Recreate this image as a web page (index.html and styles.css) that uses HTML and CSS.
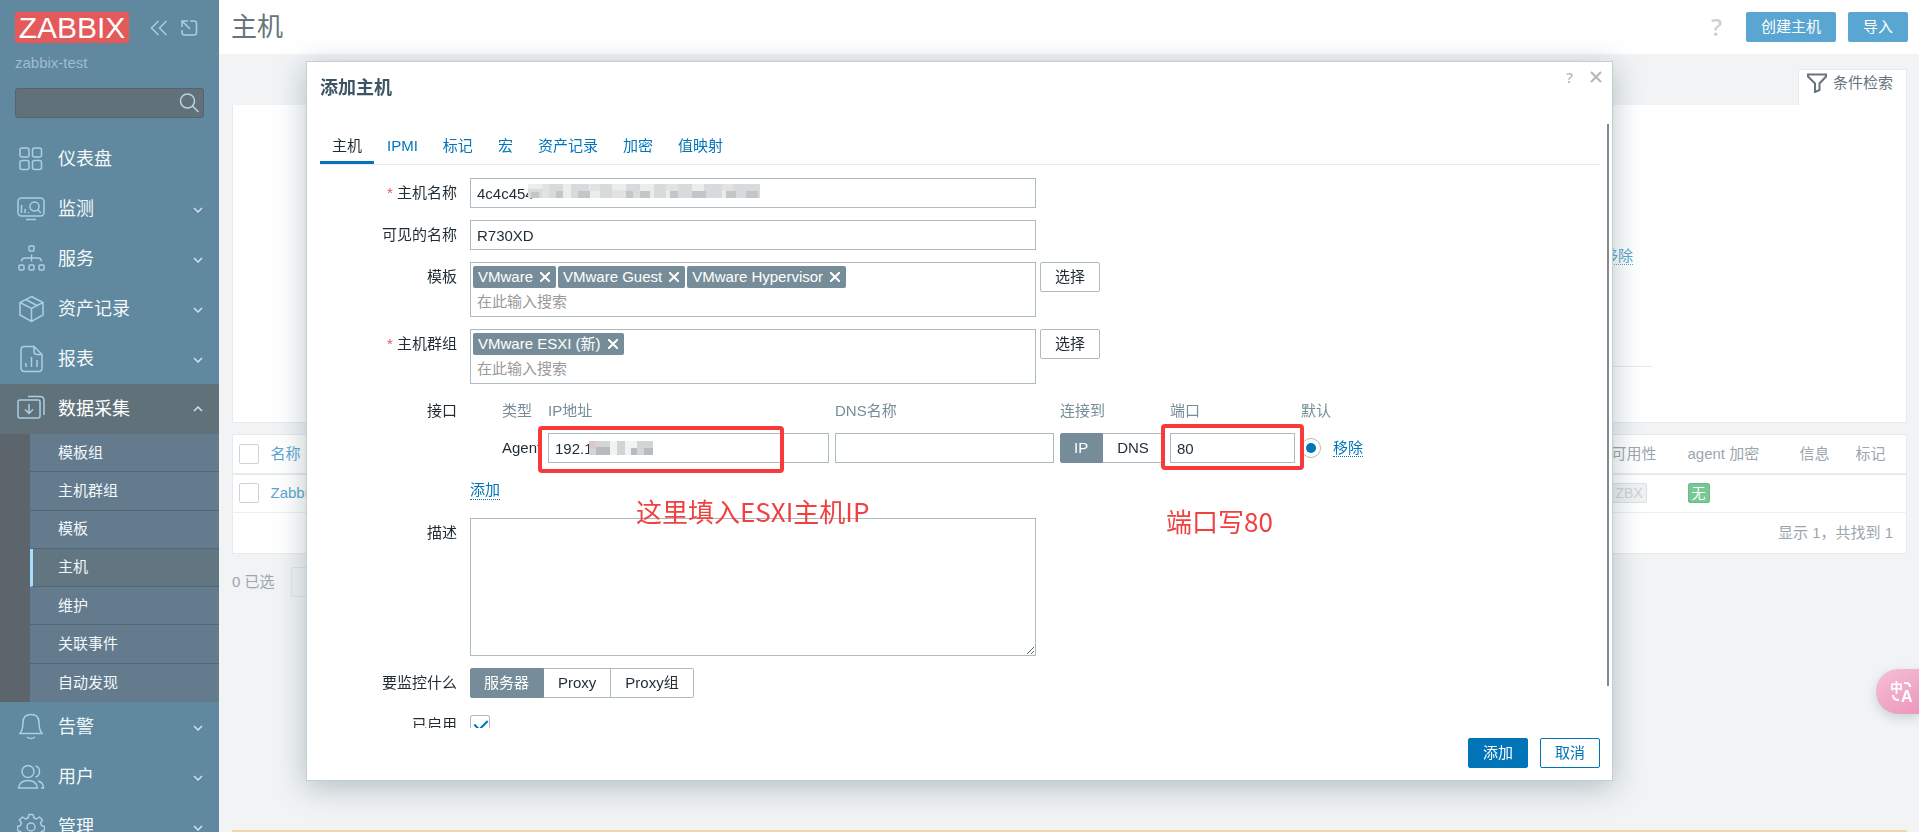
FILE: index.html
```html
<!DOCTYPE html>
<html lang="zh-CN">

<head>
  <meta charset="utf-8">
  <title>主机</title>
  <link rel="icon" href="data:,">
  <link rel="stylesheet" href="styles.css">
</head>

<body>
  <aside class="sidebar">
    <div class="sidebar-header">
      <a class="logo" href="#">ZABBIX</a>
      <button class="icon-button" type="button" aria-label="收起">
        <svg width="18" height="18" viewBox="0 0 18 18"><path d="M8.500 2 1.500 9l7 7M16.500 2l-7 7 7 7"/></svg>
      </button>
      <button class="icon-button" type="button" aria-label="隐藏">
        <svg width="18" height="18" viewBox="0 0 18 18"><path d="M10 2h4q2.500 0 2.500 2.500v9q0 2.500-2.500 2.500H4.500Q2 16 2 13.500V11M2 8V2h6M2.500 2.500l7.500 7.500"/></svg>
      </button>
    </div>
    <div class="server-name">zabbix-test</div>
    <form class="search">
      <input type="text" aria-label="搜索">
      <button type="button" aria-label="搜索">
        <svg width="20" height="20" viewBox="0 0 20 20"><circle cx="8.500" cy="8" r="7"/><path d="M13.500 13l6 6"/></svg>
      </button>
    </form>

    <nav>
      <ul class="menu">
        <li>
          <a href="#">
            <svg class="menu-icon" viewBox="0 0 28 28"><rect x="3" y="3" width="9" height="9" rx="2"/><rect x="15.500" y="3" width="9" height="9" rx="2"/><rect x="3" y="15.500" width="9" height="9" rx="2"/><rect x="15.500" y="15.500" width="9" height="9" rx="2"/></svg>
            <span>仪表盘</span>
          </a>
        </li>
        <li>
          <a href="#">
            <svg class="menu-icon" viewBox="0 0 28 28"><rect x="1" y="3" width="26" height="18" rx="3.500"/><path d="M9 24.500h10M4.500 10v8M8 14v4M11.500 17v1"/><circle cx="17.500" cy="11.500" r="4.500"/><path d="M21 15l3 3"/></svg>
            <span>监测</span>
            <svg class="chevron" viewBox="0 0 8 8"><path d="M0 3l4 4 4-4"/></svg>
          </a>
        </li>
        <li>
          <a href="#">
            <svg class="menu-icon" viewBox="0 0 28 28"><rect x="12" y="1" width="5" height="5" rx="1"/><rect x="2" y="20" width="5" height="5" rx="1"/><rect x="12" y="20" width="5" height="5" rx="1"/><rect x="22" y="20" width="5" height="5" rx="1"/><path d="M14.500 9.500v7M4.500 16.500q0-3.500 4-3.500h12q4 0 4 3.500"/></svg>
            <span>服务</span>
            <svg class="chevron" viewBox="0 0 8 8"><path d="M0 3l4 4 4-4"/></svg>
          </a>
        </li>
        <li>
          <a href="#">
            <svg class="menu-icon" viewBox="0 0 28 28"><path d="M14.500 1.500l11.500 6v12.500l-11.500 6.500-11.500-6.500v-12.500zM3 7.500l11.500 6 11.500-6M14.500 13.500v13M8.500 4.500l11.500 6"/></svg>
            <span>资产记录</span>
            <svg class="chevron" viewBox="0 0 8 8"><path d="M0 3l4 4 4-4"/></svg>
          </a>
        </li>
        <li>
          <a href="#">
            <svg class="menu-icon" viewBox="0 0 28 28"><path d="M17 1.500H7.500q-3.500 0-3.500 3.500v18q0 3.500 3.500 3.500h14q3.500 0 3.500-3.500V9.500zM17 1.500v5q0 3 3 3h5M9 18v4M14.500 12v10M20 15v7"/></svg>
            <span>报表</span>
            <svg class="chevron" viewBox="0 0 8 8"><path d="M0 3l4 4 4-4"/></svg>
          </a>
        </li>
        <li class="open">
          <a href="#">
            <svg class="menu-icon" viewBox="0 0 28 28"><rect x="1" y="5" width="22" height="18" rx="2"/><path d="M11 1.500h12q4 0 4 4V20M12 9v9M8 14.500l4 4 4-4"/></svg>
            <span>数据采集</span>
            <svg class="chevron" viewBox="0 0 8 8"><path d="M0 6l4-4 4 4"/></svg>
          </a>
          <ul class="submenu">
            <li><a href="#">模板组</a></li>
            <li><a href="#">主机群组</a></li>
            <li><a href="#">模板</a></li>
            <li><a class="selected" href="#">主机</a></li>
            <li><a href="#">维护</a></li>
            <li><a href="#">关联事件</a></li>
            <li><a href="#">自动发现</a></li>
          </ul>
        </li>
        <li>
          <a href="#">
            <svg class="menu-icon" viewBox="0 0 28 28"><path d="M3 20.500q3-4 3-11 0-8 8-8t8 8q0 7 3 11zM10 24q4 3 8 0"/></svg>
            <span>告警</span>
            <svg class="chevron" viewBox="0 0 8 8"><path d="M0 3l4 4 4-4"/></svg>
          </a>
        </li>
        <li>
          <a href="#">
            <svg class="menu-icon" viewBox="0 0 28 28"><circle cx="11" cy="8.500" r="6"/><path d="M1.500 25q1-7.500 9.500-7.500t9.500 7.500zM18.500 3q4 1 4 5.500t-4 5.500M21 18q5.500 1.500 5.500 7H24"/></svg>
            <span>用户</span>
            <svg class="chevron" viewBox="0 0 8 8"><path d="M0 3l4 4 4-4"/></svg>
          </a>
        </li>
        <li>
          <a href="#">
            <svg class="menu-icon" viewBox="0 0 28 28"><circle cx="14" cy="14" r="4"/><path stroke-linejoin="round" d="M12 1.500h4l1 3.500 2.500 1 3-2 3 3-2 3 1 2.500 3 1v4l-3 1-1 2.500 2 3-3 3-3-2-2.500 1-1 2.500h-4l-1-2.500-2.500-1-3 2-3-3 2-3-1-2.500-3-1v-4l3-1 1-2.500-2-3 3-3 3 2L11 5z"/></svg>
            <span>管理</span>
            <svg class="chevron" viewBox="0 0 8 8"><path d="M0 3l4 4 4-4"/></svg>
          </a>
        </li>
      </ul>
    </nav>
  </aside>

  <div class="wrapper">
    <header class="page-header">
      <h1>主机</h1>
      <a class="help" href="#">?</a>
      <button class="btn" type="button">创建主机</button>
      <button class="btn" type="button">导入</button>
    </header>

    <main>
      <div class="filter-tab">
        <a href="#">
          <svg width="22" height="20" viewBox="0 0 22 20"><path d="M2 1.500h18v2l-6.500 7v6.500l-4.500 2v-8.500L2 3.500z"/></svg>
          条件检索
        </a>
      </div>
      <section class="filter">
        <div class="filter-tags"><a class="dotted" href="#">移除</a></div>
      </section>

      <table class="list">
        <thead>
          <tr>
            <th class="col-check"><input type="checkbox" aria-label="全选"></th>
            <th><a href="#">名称</a></th>
            <th class="col-available">可用性</th>
            <th class="col-agent">agent 加密</th>
            <th class="col-info">信息</th>
            <th class="col-tags">标记</th>
          </tr>
        </thead>
        <tbody>
          <tr>
            <td><input type="checkbox" aria-label="Zabbix server"></td>
            <td><a href="#">Zabbix server</a></td>
            <td><span class="badge badge-grey">ZBX</span></td>
            <td><span class="badge badge-green">无</span></td>
            <td></td>
            <td></td>
          </tr>
        </tbody>
        <tfoot>
          <tr><td colspan="6">显示 1，共找到 1</td></tr>
        </tfoot>
      </table>

      <div class="actions">
        <span>0 已选</span>
        <button type="button" disabled>启用</button>
      </div>
    </main>
    <div class="warning-line"></div>
  </div>

  <div class="overlay">
    <div class="modal" role="dialog" aria-labelledby="modal-title">
      <div class="modal-header">
        <h2 id="modal-title">添加主机</h2>
        <a class="modal-help" href="#">?</a>
        <button class="modal-close" type="button" aria-label="关闭">
          <svg width="12" height="12" viewBox="0 0 12 12"><path d="M1 1l10 10M11 1L1 11"/></svg>
        </button>
      </div>

      <div class="modal-body">
        <ul class="tabs">
          <li class="active"><a href="#">主机</a></li>
          <li><a href="#">IPMI</a></li>
          <li><a href="#">标记</a></li>
          <li><a href="#">宏</a></li>
          <li><a href="#">资产记录</a></li>
          <li><a href="#">加密</a></li>
          <li><a href="#">值映射</a></li>
        </ul>

        <form class="form-grid">
          <label class="required" for="host">主机名称</label>
          <div class="field">
            <input id="host" class="wide" type="text" value="4c4c454">
            <svg class="mosaic mosaic-host" width="232" height="14" viewBox="0 0 232 14">
              <rect width="232" height="14" fill="#ebecec"/>
              <path fill="#d9dadb" d="M0 5h14v9H0zM21 0h14v14H21zM43 0h18v14H43zM72 0h12v14H72zM98 0h14v14H98zM126 0h12v14h-12zM150 0h14v14h-14zM176 0h18v14h-18zM205 0h27v14h-27z"/>
              <path fill="#c3c5c7" d="M3 8h8v6H3zM28 7h7v7h-7zM50 7h12v7H50zM98 7h7v7h-7zM112 7h10v7h-10zM142 7h8v7h-8zM164 7h14v7h-14zM198 7h10v7h-10zM218 7h12v7h-12z"/>
              <path fill="#e2e2e3" d="M14 0h7v14h-7zM62 0h10v7H62zM84 6h14v8H84zM138 0h12v7h-12zM194 0h11v7h-11z"/>
            </svg>
          </div>

          <label for="visible-name">可见的名称</label>
          <div class="field"><input id="visible-name" class="wide" type="text" value="R730XD"></div>

          <label for="templates">模板</label>
          <div class="field">
            <div class="multiselect wide">
              <ul>
                <li>VMware <button type="button" aria-label="移除"><svg width="10" height="10" viewBox="0 0 10 10"><path d="M0 0l10 10M10 0L0 10"/></svg></button></li>
                <li>VMware Guest <button type="button" aria-label="移除"><svg width="10" height="10" viewBox="0 0 10 10"><path d="M0 0l10 10M10 0L0 10"/></svg></button></li>
                <li>VMware Hypervisor <button type="button" aria-label="移除"><svg width="10" height="10" viewBox="0 0 10 10"><path d="M0 0l10 10M10 0L0 10"/></svg></button></li>
              </ul>
              <input id="templates" type="text" placeholder="在此输入搜索">
            </div>
            <button class="btn-grey" type="button">选择</button>
          </div>

          <label class="required" for="groups">主机群组</label>
          <div class="field">
            <div class="multiselect wide">
              <ul>
                <li>VMware ESXI (新) <button type="button" aria-label="移除"><svg width="10" height="10" viewBox="0 0 10 10"><path d="M0 0l10 10M10 0L0 10"/></svg></button></li>
              </ul>
              <input id="groups" type="text" placeholder="在此输入搜索">
            </div>
            <button class="btn-grey" type="button">选择</button>
          </div>

          <div class="form-label">接口</div>
          <div class="interfaces">
            <table>
              <thead>
                <tr>
                  <th class="col-toggle"></th>
                  <th class="col-type">类型</th>
                  <th class="col-ip">IP地址</th>
                  <th class="col-dns">DNS名称</th>
                  <th class="col-connect">连接到</th>
                  <th class="col-port">端口</th>
                  <th class="col-default">默认</th>
                  <th></th>
                </tr>
              </thead>
              <tbody>
                <tr>
                  <td></td>
                  <td>Agent</td>
                  <td>
                    <div class="field">
                      <input type="text" aria-label="IP地址" value="192.1">
                      <svg class="mosaic mosaic-ip" width="64" height="14" viewBox="0 0 64 14">
                        <rect width="64" height="14" fill="#f1f2f2"/>
                        <path fill="#d3d4d6" d="M0 0h21v14H0zM28 0h8v14h-8zM48 0h16v14H48z"/>
                        <path fill="#b8babd" d="M7 6h14v8H7zM42 7h6v7h-6zM55 7h9v7h-9z"/>
                        <path fill="#d9c9c4" d="M0 0h6v7H0z"/>
                      </svg>
                      <div class="mark mark-ip"></div>
                      <div class="note note-ip">这里填入ESXI主机IP</div>
                    </div>
                  </td>
                  <td><input type="text" aria-label="DNS名称"></td>
                  <td>
                    <div class="segmented">
                      <input id="connect-ip" type="radio" name="connect" checked><label for="connect-ip">IP</label>
                      <input id="connect-dns" type="radio" name="connect"><label for="connect-dns">DNS</label>
                    </div>
                  </td>
                  <td>
                    <div class="field">
                      <input type="text" aria-label="端口" value="80">
                      <div class="mark mark-port"></div>
                      <div class="note note-port">端口写80</div>
                    </div>
                  </td>
                  <td><input type="radio" name="main-interface" aria-label="默认" checked></td>
                  <td><a class="dotted" href="#">移除</a></td>
                </tr>
              </tbody>
            </table>
            <a class="dotted add-interface" href="#">添加</a>
          </div>

          <label for="description">描述</label>
          <div class="field"><textarea id="description" class="wide"></textarea></div>

          <div class="form-label">要监控什么</div>
          <div class="segmented">
            <input id="by-server" type="radio" name="monitored" checked><label for="by-server">服务器</label>
            <input id="by-proxy" type="radio" name="monitored"><label for="by-proxy">Proxy</label>
            <input id="by-group" type="radio" name="monitored"><label for="by-group">Proxy组</label>
          </div>

          <label for="enabled">已启用</label>
          <div class="field field-check"><input id="enabled" type="checkbox" checked></div>
        </form>
      </div>
      <div class="scroll-thumb"></div>

      <div class="modal-footer">
        <button class="btn-primary" type="button">添加</button>
        <button class="btn-alt" type="button">取消</button>
      </div>
    </div>
  </div>

  <button class="translate" type="button" aria-label="翻译">
    <svg width="24" height="24" viewBox="0 0 24 24">
      <text x="0" y="12" font-size="13">中</text>
      <text x="11" y="22" font-size="16">A</text>
      <path d="M14 3h2q4 0 4 4M3 15q0 5 6 5"/>
    </svg>
  </button>
</body>

</html>
```

FILE: styles.css
```css
* {
  box-sizing: border-box;
}

body {
  margin: 0;
  height: 100vh;
  display: flex;
  overflow: hidden;
  font-family: "Liberation Sans", "Noto Sans CJK SC", sans-serif;
  font-size: 15px;
  line-height: 18px;
  color: #1f2c33;
  background: #f1f3f5;
}

ul {
  list-style: none;
  margin: 0;
  padding: 0;
}

a {
  color: #0275b8;
  text-decoration: none;
}

button,
input,
textarea {
  font: inherit;
  color: inherit;
  margin: 0;
}

button {
  padding: 0;
  border: 0;
  background: none;
}

svg {
  display: block;
  fill: none;
}

/* sidebar */
.sidebar {
  width: 219px;
  flex-shrink: 0;
  overflow: hidden;
  background: #60889e;
}

.sidebar-header {
  display: flex;
  align-items: center;
  gap: 12px;
  padding: 12px 15px 0;
}

.logo {
  width: 114px;
  height: 31px;
  margin-right: 9px;
  line-height: 32px;
  font-size: 30px;
  text-align: center;
  color: #fff;
  background: #e45959;
}

.icon-button svg,
.search svg,
.menu svg {
  stroke: #a9cfe6;
  stroke-width: 1.5;
}

.server-name {
  padding: 11px 15px 0;
  color: #9dbdd0;
}

.search {
  display: flex;
  align-items: center;
  height: 30px;
  margin: 16px 15px;
  padding-right: 4px;
  border: 1px solid #55646c;
  border-radius: 3px;
  background: #60717a;
}

.search input {
  flex: 1;
  min-width: 0;
  border: 0;
  background: none;
}

.search svg {
  stroke: #b9d3e2;
}

.menu a {
  display: flex;
  align-items: center;
  height: 50px;
  padding: 0 17px;
  font-size: 18px;
  color: #f2f8fb;
}

.menu span {
  flex: 1;
}

.menu-icon {
  width: 28px;
  height: 28px;
  margin-right: 13px;
}

.menu .chevron {
  width: 8px;
  height: 8px;
  overflow: visible;
  stroke: #cfe5f2;
}

.menu .open {
  background: #5d656c;
}

.menu .open > a {
  background: #60717a;
  color: #fff;
}

.menu .submenu {
  display: grid;
  grid-auto-rows: 1fr;
  height: 268px;
  margin-left: 30px;
  background: #637b8d;
}

.menu .submenu a {
  height: 100%;
  padding: 0 0 0 28px;
  font-size: 15px;
  border-bottom: 1px solid #506872;
}

.menu .submenu li:last-child a {
  border-bottom: 0;
}

.menu .submenu .selected {
  padding-left: 25px;
  border-left: 3px solid #a6dcfb;
  background: #617680;
}

/* page */
.wrapper {
  flex: 1;
  min-width: 0;
  display: flex;
  flex-direction: column;
}

.page-header {
  display: flex;
  align-items: center;
  gap: 12px;
  height: 54px;
  padding: 0 11px 0 12px;
  background: #fff;
}

.page-header h1 {
  flex: 1;
  margin: 0;
  font-size: 26px;
  font-weight: normal;
  line-height: 30px;
  color: #66757c;
}

.help {
  margin-right: 12px;
  font-family: "Open Sans", sans-serif;
  font-size: 24px;
  font-weight: 600;
  color: #ccd1d3;
}

.btn {
  height: 30px;
  padding: 0 15px;
  border-radius: 2px;
  color: #fff;
  background: #58a6d1;
}

main {
  flex: 1;
  padding: 15px 12px 0 13px;
}

.filter-tab {
  display: flex;
  justify-content: flex-end;
}

.filter-tab a {
  display: flex;
  gap: 5px;
  height: 36px;
  padding: 3px 13px 0 7px;
  line-height: 20px;
  color: #66757c;
  background: #fff;
  border: 1px solid #e6eaec;
  border-bottom: 0;
}

.filter-tab svg {
  stroke: #66757c;
  stroke-width: 2;
}

.filter {
  display: flex;
  justify-content: flex-end;
  height: 318px;
  padding-right: 254px;
  background: #fff;
  border: 1px solid #e6eaec;
  border-top: 0;
}

.filter-tags {
  width: 500px;
  height: 262px;
  padding: 142px 19px 0 0;
  text-align: right;
  border-bottom: 1px solid #e6eaec;
}

.filter a,
.list a {
  color: #5aa5cf;
}

.dotted {
  border-bottom: 1px dotted currentColor;
}

.list {
  width: 100%;
  margin-top: 11px;
  border-collapse: collapse;
  table-layout: fixed;
  background: #fff;
  border: 1px solid #e6eaec;
  color: #9aa6ac;
}

.list th,
.list td {
  padding: 0;
  height: 39px;
  text-align: left;
  font-weight: normal;
}

.list thead th {
  border-bottom: 2px solid #e6eaec;
}

.list tfoot td {
  height: 41px;
  padding-right: 13px;
  text-align: right;
  border-top: 1px solid #edf0f1;
}

.list .col-check {
  width: 38px;
}

.list .col-available {
  width: 76px;
}

.list .col-agent {
  width: 112px;
}

.list .col-info {
  width: 56px;
}

.list .col-tags {
  width: 51px;
}

.list input {
  margin-left: 6px;
}

.badge {
  display: inline-block;
  height: 20px;
  padding: 0 3px;
  border: 1px solid #dde1e3;
  border-radius: 2px;
  font-size: 14px;
}

.badge-grey {
  color: #cdd3d6;
  background: #f0f2f2;
}

.badge-green {
  color: #fff;
  background: #77c893;
  border-color: #6abb87;
}

.actions {
  display: flex;
  align-items: center;
  gap: 16px;
  padding-top: 13px;
  color: #9aa6ac;
}

.actions button {
  height: 30px;
  padding: 0 18px;
  border: 1px solid #e0e4e6;
  border-radius: 2px;
}

.warning-line {
  height: 2px;
  margin: 0 12px 0 13px;
  background: #ecd9a4;
}

input[type="checkbox"],
input[type="radio"] {
  appearance: none;
  display: block;
  width: 20px;
  height: 20px;
  border: 1px solid #acbbc2;
  border-radius: 2px;
  background: #fff;
}

.list input[type="checkbox"] {
  border-color: #cdd3d6;
}

input[type="checkbox"]:checked::after {
  content: "";
  display: block;
  width: 6px;
  height: 11px;
  margin: 1px 0 0 6px;
  border: solid #0275b8;
  border-width: 0 2px 2px 0;
  transform: rotate(45deg);
}

input[type="radio"] {
  border-radius: 50%;
}

input[type="radio"]:checked::after {
  content: "";
  display: block;
  width: 10px;
  height: 10px;
  margin: 4px;
  border-radius: 50%;
  background: #0275b8;
}

/* dialog */
.overlay {
  position: fixed;
  inset: 0;
  display: flex;
  justify-content: center;
  padding: 61px 12px 51px;
}

.modal {
  position: relative;
  display: flex;
  flex-direction: column;
  width: 100%;
  max-width: 1307px;
  background: #fff;
  border: 1px solid #c5cfd1;
  box-shadow: 0 6px 28px rgba(80, 110, 115, 0.4);
}

.modal-header {
  display: flex;
  height: 62px;
  padding: 0 10px 0 13px;
  color: #b0b8bb;
}

.modal-header h2 {
  flex: 1;
  margin: 0;
  font-size: 18px;
  line-height: 52px;
  color: #3c5563;
}

.modal-help {
  margin-right: 17px;
  font-family: "Open Sans", sans-serif;
  line-height: 30px;
  font-weight: 600;
  color: inherit;
}

.modal-close {
  height: 30px;
}

.modal-close svg {
  stroke: currentColor;
  stroke-width: 2;
}

.modal-body {
  flex: 1;
  min-height: 0;
  padding: 0 12px 0 13px;
  overflow: auto;
  scrollbar-width: none;
}

.scroll-thumb {
  position: absolute;
  top: 62px;
  right: 3px;
  width: 2px;
  height: 562px;
  background: #85898b;
}

.tabs {
  display: flex;
  gap: 1px;
  border-bottom: 1px solid #e8ebec;
}

.tabs a {
  display: block;
  padding: 6px 12px 0;
  line-height: 31px;
  border-bottom: 3px solid transparent;
}

.tabs .active a {
  color: #1f2c33;
  border-color: #0275b8;
}

.form-grid {
  display: grid;
  grid-template-columns: 137px 1fr;
  gap: 12px 13px;
  padding: 13px 0;
}

.form-grid > label,
.form-label {
  line-height: 30px;
  text-align: right;
}

.required::before {
  content: "* ";
  color: #e45959;
}

.field {
  position: relative;
  display: flex;
  align-items: flex-start;
  gap: 4px;
}

.field-check {
  height: 30px;
  align-items: center;
}

.wide {
  width: 566px;
}

input[type="text"].wide,
.interfaces input[type="text"] {
  height: 30px;
  padding: 0 6px;
  border: 1px solid #acbbc2;
}

textarea {
  height: 138px;
  border: 1px solid #acbbc2;
}

.multiselect {
  height: 55px;
  padding: 3px 2px;
  border: 1px solid #acbbc2;
}

.multiselect ul {
  display: flex;
  gap: 2px;
}

.multiselect li {
  display: flex;
  align-items: center;
  gap: 7px;
  height: 22px;
  padding: 0 6px 0 5px;
  border-radius: 2px;
  color: #fff;
  background: #768d99;
}

.multiselect svg {
  stroke: #fff;
  stroke-width: 2;
}

.multiselect input {
  width: 100%;
  height: 26px;
  padding: 0 4px;
  border: 0;
}

.multiselect input::placeholder {
  color: #9a9a9a;
}

.btn-grey {
  height: 30px;
  padding: 0 14px;
  border: 1px solid #acbbc2;
  border-radius: 2px;
}

.interfaces {
  padding-bottom: 6px;
}

.interfaces table {
  border-collapse: collapse;
  table-layout: fixed;
  width: 900px;
}

.interfaces th {
  padding: 0 0 7px;
  line-height: 30px;
  font-weight: normal;
  text-align: left;
  color: #768d99;
}

.interfaces td {
  padding: 0;
  height: 30px;
}

.interfaces input[type="text"] {
  display: block;
  width: calc(100% - 6px);
}

.interfaces .col-toggle {
  width: 32px;
}

.interfaces .col-type {
  width: 46px;
}

.interfaces .col-ip {
  width: 287px;
}

.interfaces .col-dns {
  width: 225px;
}

.interfaces .col-connect {
  width: 110px;
}

.interfaces .col-port {
  width: 131px;
}

.interfaces .col-default {
  width: 32px;
}

.add-interface {
  display: inline-block;
  margin-top: 18px;
}

.segmented {
  display: flex;
}

.segmented input[type="radio"] {
  position: absolute;
  opacity: 0;
}

.segmented label {
  height: 30px;
  padding: 0 14px;
  line-height: 28px;
  border: 1px solid #acbbc2;
  border-left-width: 0;
}

.segmented label:first-of-type {
  padding-left: 13px;
  border-left-width: 1px;
  border-radius: 2px 0 0 2px;
}

.segmented label:last-of-type {
  border-radius: 0 2px 2px 0;
}

.segmented input:checked + label {
  color: #fff;
  background: #768d99;
  border-color: #768d99;
}

/* marks laid over the form */
.mosaic {
  position: absolute;
}

.mosaic-host {
  top: 6px;
  left: 58px;
}

.mosaic-ip {
  top: 8px;
  left: 41px;
}

.mark {
  position: absolute;
  z-index: 1;
  border: 4px solid #f93a3a;
  border-radius: 4px;
}

.mark-ip {
  top: -7px;
  left: -10px;
  width: 246px;
  height: 47px;
}

.mark-port {
  top: -9px;
  left: -9px;
  width: 143px;
  height: 46px;
}

.note {
  position: absolute;
  z-index: 1;
  font-family: "Noto Sans CJK SC", sans-serif;
  font-size: 26px;
  line-height: 30px;
  white-space: nowrap;
  color: #f04141;
}

.note-ip {
  top: 63px;
  left: 88px;
}

.note-port {
  top: 73px;
  left: -4px;
}

.modal-footer {
  display: flex;
  justify-content: flex-end;
  gap: 12px;
  padding: 10px 12px 12px;
}

.btn-primary,
.btn-alt {
  height: 30px;
  padding: 0 14px;
  border: 1px solid #0275b8;
  border-radius: 2px;
  color: #0275b8;
}

.btn-primary {
  color: #fff;
  background: #0275b8;
}

.translate {
  position: fixed;
  top: 669px;
  right: 0;
  width: 43px;
  height: 45px;
  padding-left: 14px;
  border-radius: 22px 0 0 22px;
  background: linear-gradient(150deg, #f6bfd7, #ec97bd);
  box-shadow: 0 4px 10px rgba(120, 140, 150, 0.3);
}

.translate text {
  font-weight: bold;
  fill: #fff;
}

.translate path {
  stroke: #fff;
  stroke-width: 2;
}
```
